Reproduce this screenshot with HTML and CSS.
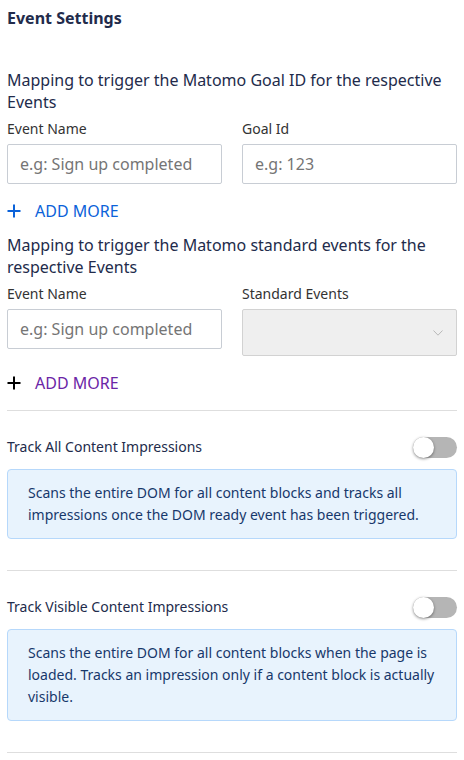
FILE: index.html
```html
<!DOCTYPE html>
<html>
<head>
<meta charset="utf-8">
<link rel="stylesheet" href="styles.css">
</head>
<body>
<div class="page">
  <h2 class="title">Event Settings</h2>

  <section class="mapping first">
    <h3 class="subtitle">Mapping to trigger the Matomo Goal ID for the respective Events</h3>
    <div class="grid">
      <div class="field">
        <label class="label">Event Name</label>
        <input class="input" type="text" placeholder="e.g: Sign up completed">
      </div>
      <div class="field">
        <label class="label">Goal Id</label>
        <input class="input" type="text" placeholder="e.g: 123">
      </div>
    </div>
    <div class="add add-blue">
      <svg class="plus" width="14" height="14" viewBox="0 0 14 14"><path d="M7 0.5V13.5M0.5 7H13.5" stroke="currentColor" stroke-width="2" fill="none"/></svg>
      <span>ADD MORE</span>
    </div>
  </section>

  <section class="mapping second">
    <h3 class="subtitle">Mapping to trigger the Matomo standard events for the respective Events</h3>
    <div class="grid">
      <div class="field">
        <label class="label">Event Name</label>
        <input class="input" type="text" placeholder="e.g: Sign up completed">
      </div>
      <div class="field">
        <label class="label">Standard Events</label>
        <div class="select">
          <svg class="chev" width="10" height="6" viewBox="0 0 10 6"><path d="M0.5 0.5L5 5.2L9.5 0.5" stroke="#b8b8b8" stroke-width="1" fill="none"/></svg>
        </div>
      </div>
    </div>
    <div class="add add-purple">
      <svg class="plus plus-black" width="14" height="14" viewBox="0 0 14 14"><path d="M7 0.5V13.5M0.5 7H13.5" stroke="currentColor" stroke-width="2" fill="none"/></svg>
      <span>ADD MORE</span>
    </div>
  </section>

  <hr class="divider">

  <section class="setting">
    <div class="setting-row">
      <span class="setting-label">Track All Content Impressions</span>
      <span class="toggle"><span class="knob"></span></span>
    </div>
    <div class="info">Scans the entire DOM for all content blocks and tracks all impressions once the DOM ready event has been triggered.</div>
  </section>

  <hr class="divider">

  <section class="setting">
    <div class="setting-row">
      <span class="setting-label">Track Visible Content Impressions</span>
      <span class="toggle"><span class="knob"></span></span>
    </div>
    <div class="info">Scans the entire DOM for all content blocks when the page is loaded. Tracks an impression only if a content block is actually visible.</div>
  </section>

  <hr class="divider">
</div>
</body>
</html>
```

FILE: styles.css
```css
* { box-sizing: border-box; }
html, body { margin: 0; padding: 0; background: #fff; }
body {
  font-family: "Noto Sans", "Open Sans", sans-serif;
  color: #222b4b;
}
.page {
  padding: 7px 7px 0 7px;
  width: 464px;
}
.title {
  margin: 0;
  font-size: 16px;
  line-height: 22px;
  font-weight: 700;
  color: #222b4b;
}
.subtitle {
  margin: 0;
  font-size: 16px;
  line-height: 22px;
  font-weight: 400;
  color: #222b4b;
}
.mapping.first { margin-top: 40px; }
.mapping.second { margin-top: 12px; }
.grid {
  display: grid;
  grid-template-columns: 215px 215px;
  column-gap: 20px;
  margin-top: 6px;
  align-items: start;
}
.field { display: flex; flex-direction: column; }
.label {
  font-size: 14px;
  line-height: 20px;
  color: #333;
  margin-bottom: 5px;
}
.input {
  height: 40px;
  width: 100%;
  border: 1px solid #c8cdd4;
  border-radius: 2px;
  padding: 0 12px;
  font-family: inherit;
  font-size: 16px;
  color: #333;
  background: #fff;
  outline: none;
}
.input::placeholder { color: #757575; }
.select {
  height: 47px;
  border: 1px solid #d2d2d2;
  border-radius: 2px;
  background: #efefef;
  display: flex;
  align-items: center;
  justify-content: flex-end;
  padding-right: 13px;
}
.chev { display: block; margin-top: 1px; }
.add {
  display: flex;
  align-items: center;
  gap: 14px;
  font-size: 16px;
  line-height: 22px;
  margin-top: 16px;
}
.second .add { margin-top: 16px; }
.add-blue { color: #0b62d9; }
.add-purple { color: #6b25a6; }
.plus { display: block; flex: none; }
.plus-black { color: #000; }
.divider {
  border: 0;
  border-top: 1px solid #dedede;
  margin: 16px 0 0 0;
  height: 0;
}
.setting { margin-top: 25px; margin-bottom: 31px; }
.setting-row {
  display: flex;
  align-items: center;
  justify-content: space-between;
  height: 22px;
}
.setting-label {
  font-size: 14px;
  line-height: 20px;
  color: #222b4b;
}
.toggle {
  position: relative;
  width: 44px;
  height: 21px;
  border-radius: 11px;
  background: #b5b5b5;
  display: block;
}
.knob {
  position: absolute;
  left: 0;
  top: 0;
  width: 21px;
  height: 21px;
  border-radius: 50%;
  background: #fff;
  box-shadow: 0 1px 3px rgba(0,0,0,0.45);
}
.info {
  margin-top: 11px;
  background: #e8f3fd;
  border: 1px solid #b6d8fb;
  border-radius: 4px;
  padding: 12px 20px;
  font-size: 14px;
  line-height: 22px;
  color: #17386b;
}
```
